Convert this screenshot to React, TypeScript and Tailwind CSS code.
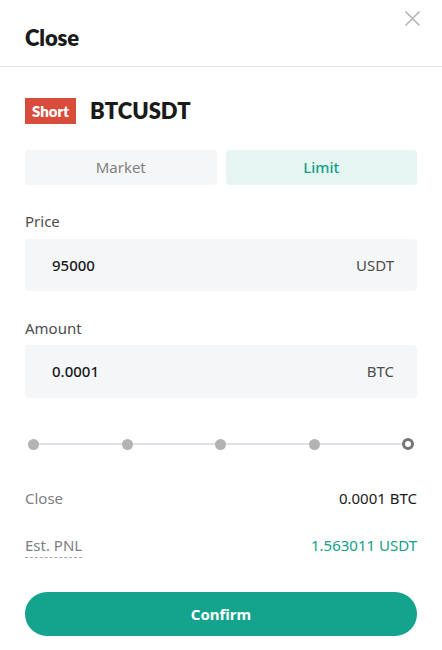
import { useState } from 'react';

const FONT = { fontFamily: '"Noto Sans", "Open Sans", Arial, sans-serif' };
const HEAD = { fontFamily: 'Lato, "Noto Sans", Arial, sans-serif' };

export default function App() {
    const [tab, setTab] = useState<'market' | 'limit'>('limit');
    const dots = [0, 1, 2, 3, 4];

    return (
        <div className="w-[442px] h-[650px] bg-white text-[#1a1a1a]" style={FONT}>
            <div className="relative h-[67px] border-b border-[#e6e6e6] flex items-center px-[25px]">
                <h1 className="text-[22px] font-extrabold tracking-[-0.1px] mt-[8px]" style={HEAD}>Close</h1>
                <button className="absolute right-[21px] top-[10px] text-[#b3b3b3]">
                    <svg width="17" height="17" viewBox="0 0 17 17" fill="none" stroke="currentColor" strokeWidth="1.5">
                        <path d="M1.5 1.5l14 14M15.5 1.5l-14 14" />
                    </svg>
                </button>
            </div>

            <div className="px-[25px]">
                <div className="flex items-center gap-[14px] mt-[31px] h-[26px] leading-none">
                    <span className="bg-[#d84c3b] text-white text-[15px] font-extrabold h-[26px] w-[51px] flex items-center justify-center" style={HEAD}>Short</span>
                    <span className="text-[22px] font-extrabold" style={HEAD}>BTCUSDT</span>
                </div>

                <div className="grid grid-cols-2 gap-[9px] mt-[26px]">
                    <button
                        onClick={() => setTab('market')}
                        className={tab === 'market' ? 'h-[35px] rounded-[4px] bg-[#e6f5f1] text-[#13a08a] text-[15px] font-medium' : 'h-[35px] rounded-[4px] bg-[#f5f6f7] text-[#808080] text-[15px]'}
                    >
                        Market
                    </button>
                    <button
                        onClick={() => setTab('limit')}
                        className={tab === 'limit' ? 'h-[35px] rounded-[4px] bg-[#e6f5f1] text-[#13a08a] text-[15px] font-medium' : 'h-[35px] rounded-[4px] bg-[#f5f6f7] text-[#808080] text-[15px]'}
                    >
                        Limit
                    </button>
                </div>

                <div className="mt-[25px] text-[15px] text-[#4d4d4d] leading-[22px]">Price</div>
                <div className="mt-[7px] h-[52px] rounded-[4px] bg-[#f5f6f7] flex items-center justify-between pl-[27px] pr-[23px]">
                    <span className="text-[15px] font-medium text-[#1a1a1a]">95000</span>
                    <span className="text-[15px] text-[#4d4d4d]">USDT</span>
                </div>

                <div className="mt-[26px] text-[15px] text-[#4d4d4d] leading-[22px]">Amount</div>
                <div className="mt-[6px] h-[53px] rounded-[4px] bg-[#f5f6f7] flex items-center justify-between pl-[27px] pr-[23px]">
                    <span className="text-[15px] font-medium text-[#1a1a1a]">0.0001</span>
                    <span className="text-[15px] text-[#4d4d4d]">BTC</span>
                </div>

                <div className="relative mt-[40px] h-[12px] mx-[3px]">
                    <div className="absolute left-[5px] right-[5px] top-[5px] h-[2px] bg-[#e0e0e6]" />
                    <div className="relative flex justify-between items-center h-full">
                        {dots.map((d) =>
                            d === 4 ? (
                                <span key={d} className="w-[12px] h-[12px] rounded-full border-[3px] border-[#757575] bg-white" />
                            ) : (
                                <span key={d} className="w-[11px] h-[11px] rounded-full bg-[#b3b3b3]" />
                            )
                        )}
                    </div>
                </div>

                <div className="mt-[37px] flex justify-between items-center text-[15px] leading-[22px]">
                    <span className="text-[#808080]">Close</span>
                    <span className="text-[#1a1a1a]">0.0001 BTC</span>
                </div>
                <div className="mt-[25px] flex justify-between items-start text-[15px] leading-[22px] h-[22px]">
                    <span className="text-[#808080] border-b border-dashed border-[#a6a6a6] pb-[1px]">Est. PNL</span>
                    <span className="text-[#13a08a]">1.563011 USDT</span>
                </div>

                <button className="mt-[36px] w-full h-[44px] rounded-full bg-[#14a38c] text-white text-[15px] font-bold">
                    Confirm
                </button>
            </div>
        </div>
    );
}
